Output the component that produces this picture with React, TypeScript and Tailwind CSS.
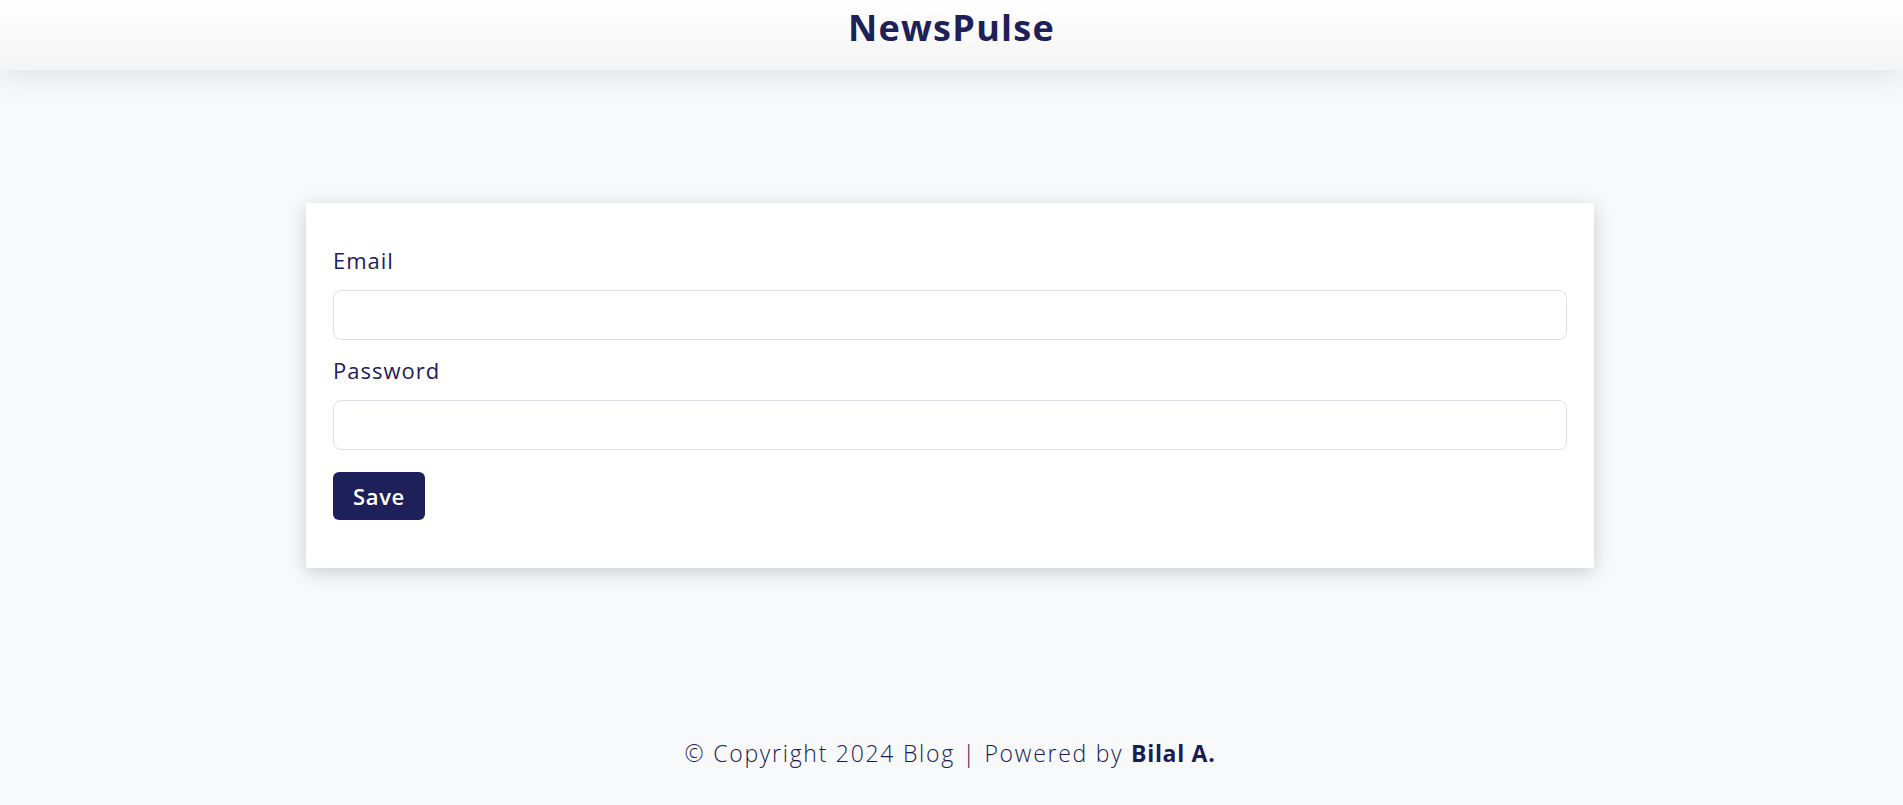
import React from "react";

export default function App() {
  const font = { fontFamily: '"Open Sans", "Noto Sans", sans-serif' };
  return (
    <div
      className="min-h-screen flex flex-col bg-[#f8f9fa] text-[#1e2059]"
      style={font}
    >
      <header className="relative z-10 h-[70px] bg-gradient-to-b from-white to-[#f4f4f4] shadow-[0_8px_30px_rgba(0,0,0,0.09)] flex justify-center pt-[10px]">
        <h1 className="text-[36px] leading-[36px] font-bold tracking-[0.035em] text-[#1e2059]">
          NewsPulse
        </h1>
      </header>

      <main className="pt-[133px] flex">
        <div className="ml-[306px] w-[1288px] bg-white shadow-[0_4px_18px_rgba(0,0,0,0.18)] px-[27px] pt-[44px] pb-[48px]">
          <form onSubmit={(e) => e.preventDefault()} className="flex flex-col">
            <label className="block text-[22px] leading-[26px] font-medium tracking-[0.045em] mb-[17px]">
              Email
            </label>
            <input
              type="email"
              className="h-[50px] w-full rounded-[8px] border border-[#dfe0e6] bg-white px-3 outline-none"
            />
            <label className="block text-[22px] leading-[26px] font-medium tracking-[0.045em] mt-[17px] mb-[17px]">
              Password
            </label>
            <input
              type="password"
              className="h-[50px] w-full rounded-[8px] border border-[#dfe0e6] bg-white px-3 outline-none"
            />
            <div className="mt-[22px]">
              <button
                type="submit"
                className="h-[48px] w-[92px] rounded-[6px] bg-[#1e2059] text-white text-[22px] leading-[26px] font-semibold tracking-[0.03em]"
              >
                Save
              </button>
            </div>
          </form>
        </div>
      </main>

      <footer className="mt-[172px] pb-[40px] flex">
        <p className="ml-[306px] w-[1288px] text-center text-[23px] leading-[26px] font-light tracking-[0.075em] text-[#1a1c55]">
          © Copyright 2024 Blog | Powered by <span className="font-bold tracking-[0.03em]">Bilal A.</span>
        </p>
      </footer>
    </div>
  );
}
